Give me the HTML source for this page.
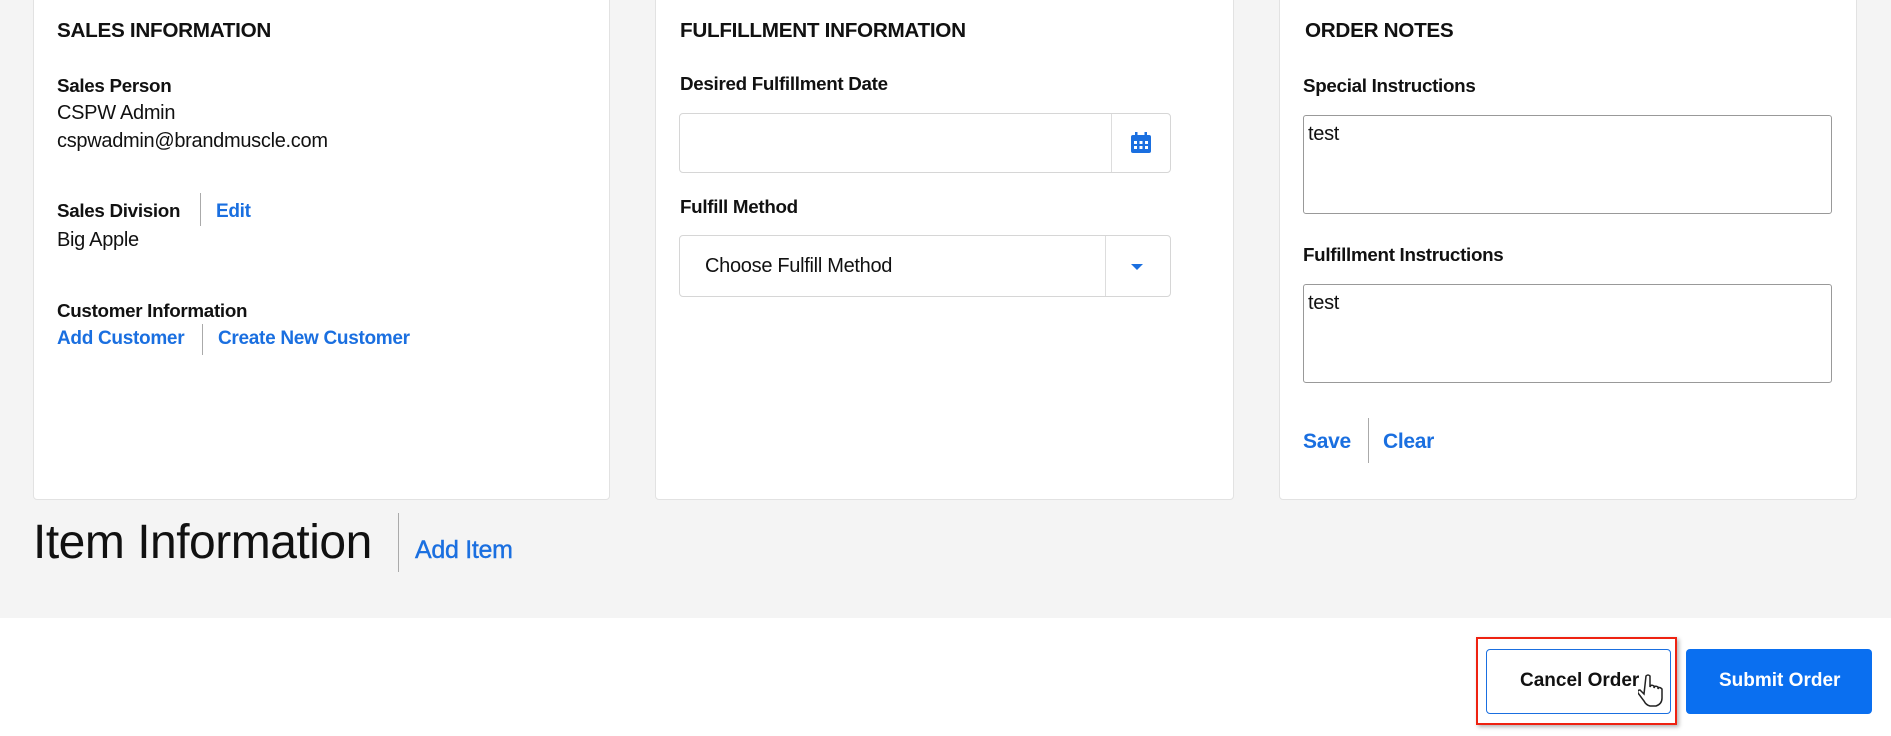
<!DOCTYPE html>
<html><head><style>
*{box-sizing:border-box;margin:0;padding:0}
body{width:1891px;height:736px;background:#fff;font-family:"Liberation Sans",sans-serif;color:#111;position:relative;overflow:hidden}
.gray{position:absolute;left:0;top:0;width:1891px;height:618px;background:#f4f4f4}
.card{position:absolute;top:-10px;height:510px;background:#fff;border:1px solid #e2e2e2;border-radius:4px}
.t{position:absolute;white-space:nowrap;line-height:1}
.h{font-size:20.7px;font-weight:bold;letter-spacing:-0.3px}
.l{font-size:18.8px;font-weight:bold;letter-spacing:-0.3px}
.v{font-size:20px;letter-spacing:-0.3px}
.a{color:#1a6fe0;font-weight:bold;font-size:19px;letter-spacing:-0.3px}
.sep{position:absolute;width:1px;background:#aaa}
.box{position:absolute;border:1px solid #d6d6d6;border-radius:4px;background:#fff}
.ta{position:absolute;border:1px solid #999;border-radius:3px;background:#fff}
</style></head><body>
<div class="gray"></div>
<div class="card" style="left:33px;width:577px"></div>
<div class="card" style="left:655px;width:579px"></div>
<div class="card" style="left:1279px;width:578px"></div>

<div class="t h" style="left:57px;top:21px">SALES INFORMATION</div>
<div class="t l" style="left:57px;top:77px">Sales Person</div>
<div class="t v" style="left:57px;top:103px">CSPW Admin</div>
<div class="t v" style="left:57px;top:131px">cspwadmin@brandmuscle.com</div>
<div class="t l" style="left:57px;top:202px">Sales Division</div>
<div class="sep" style="left:200px;top:193px;height:33px"></div>
<div class="t a" style="left:216px;top:202px">Edit</div>
<div class="t v" style="left:57px;top:230px">Big Apple</div>
<div class="t l" style="left:57px;top:302px">Customer Information</div>
<div class="t a" style="left:57px;top:329px">Add Customer</div>
<div class="sep" style="left:202px;top:324px;height:31px"></div>
<div class="t a" style="left:218px;top:329px">Create New Customer</div>

<div class="t h" style="left:680px;top:21px">FULFILLMENT INFORMATION</div>
<div class="t l" style="left:680px;top:75px">Desired Fulfillment Date</div>
<div class="box" style="left:679px;top:113px;width:492px;height:60px"></div>
<div class="sep" style="left:1111px;top:114px;height:58px;background:#ddd"></div>
<svg style="position:absolute;left:1129px;top:131px" width="24" height="24" viewBox="0 0 24 24"><rect x="2" y="4" width="20" height="18" rx="2" fill="#1a6fe0"/><rect x="6" y="1" width="2.5" height="5" fill="#1a6fe0"/><rect x="15.5" y="1" width="2.5" height="5" fill="#1a6fe0"/><g fill="#fff"><rect x="5" y="10" width="3" height="3"/><rect x="10.5" y="10" width="3" height="3"/><rect x="16" y="10" width="3" height="3"/><rect x="5" y="15" width="3" height="3"/><rect x="10.5" y="15" width="3" height="3"/><rect x="16" y="15" width="3" height="3"/></g></svg>
<div class="t l" style="left:680px;top:198px">Fulfill Method</div>
<div class="box" style="left:679px;top:235px;width:492px;height:62px"></div>
<div class="sep" style="left:1105px;top:236px;height:60px;background:#ddd"></div>
<div class="t v" style="left:705px;top:256px">Choose Fulfill Method</div>
<div style="position:absolute;left:1131px;top:264px;border-left:6px solid transparent;border-right:6px solid transparent;border-top:6px solid #1a6fe0"></div>

<div class="t h" style="left:1305px;top:21px">ORDER NOTES</div>
<div class="t l" style="left:1303px;top:77px">Special Instructions</div>
<div class="ta" style="left:1303px;top:115px;width:529px;height:99px"></div>
<div class="t v" style="left:1308px;top:124px;font-size:20px">test</div>
<div class="t l" style="left:1303px;top:246px">Fulfillment Instructions</div>
<div class="ta" style="left:1303px;top:284px;width:529px;height:99px"></div>
<div class="t v" style="left:1308px;top:293px;font-size:20px">test</div>
<div class="t a" style="left:1303px;top:431px;font-size:21px">Save</div>
<div class="sep" style="left:1368px;top:418px;height:45px"></div>
<div class="t a" style="left:1383px;top:431px;font-size:21px">Clear</div>

<div class="t" style="left:33px;top:519px;font-size:48px;letter-spacing:-0.5px">Item Information</div>
<div class="sep" style="left:398px;top:513px;height:59px"></div>
<div class="t a" style="left:415px;top:538px;font-size:25px;font-weight:normal;color:#1a6fe0;-webkit-text-stroke:0.4px #1a6fe0">Add Item</div>

<div style="position:absolute;left:1476px;top:637px;width:201px;height:88px;border:2px solid #e21;box-shadow:2px 2px 4px rgba(0,0,0,.3)"></div>
<div style="position:absolute;left:1486px;top:649px;width:185px;height:65px;border:1px solid #1a6fe0;border-radius:4px;background:#fff"></div>
<div class="t" style="left:1520px;top:671px;font-size:19px;font-weight:bold">Cancel Order</div>
<svg style="position:absolute;left:1638px;top:673px" width="28" height="34" viewBox="0 0 28 34"><path d="M8 3 q2-2 4 0 v11 q1-3 4-1 v2 q1-3 4-1 v2 q1-3 4 0 v9 q0 6-6 8 h-6 q-4-1-6-5 l-6-8 q-1-3 2-3 l4 4 z" fill="#fff" stroke="#222" stroke-width="1.5"/></svg>
<div style="position:absolute;left:1686px;top:649px;width:186px;height:65px;border-radius:4px;background:#0a6ff0"></div>
<div class="t" style="left:1719px;top:671px;font-size:19px;font-weight:bold;color:#fff">Submit Order</div>
</body></html>
